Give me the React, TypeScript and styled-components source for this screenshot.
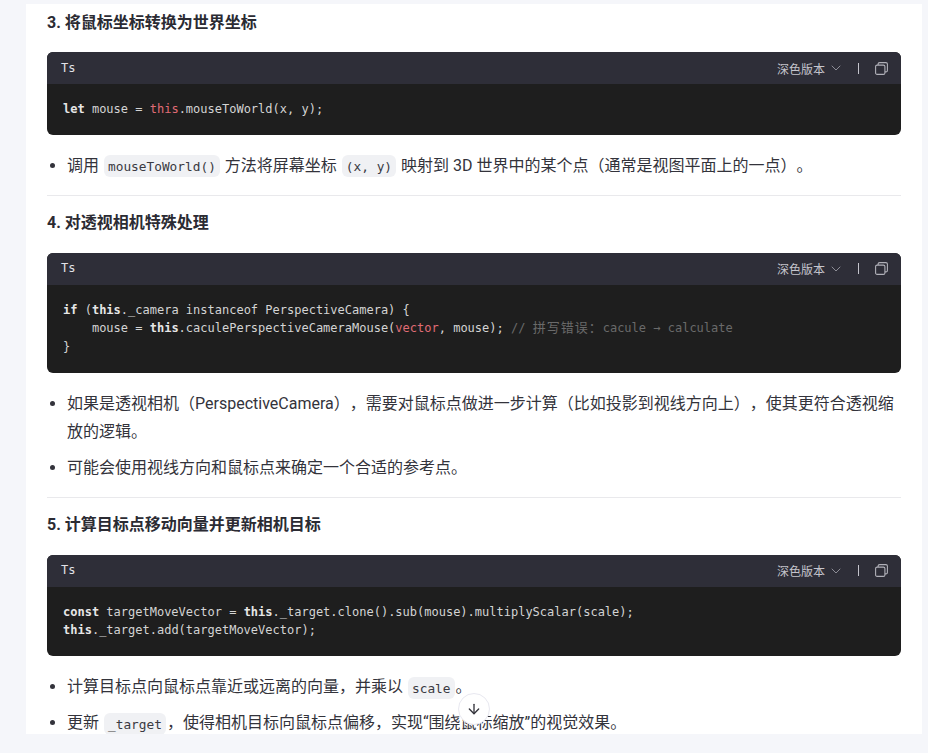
import React from "react";
import styled, { createGlobalStyle } from "styled-components";
import { ChevronDown, ArrowDown } from "lucide-react";

const GlobalStyle = createGlobalStyle`
  html, body {
    margin: 0;
    padding: 0;
    height: 753px;
    overflow: hidden;
    background: #f5f6fa;
  }
`;

const Page = styled.div`
  position: relative;
  height: 753px;
  padding: 4px 6px 19px 26px;
  box-sizing: border-box;
  font-family: Roboto, "Noto Sans CJK SC", sans-serif;
  text-spacing-trim: space-all;
  color: #33333b;
`;

const Article = styled.div`
  height: 100%;
  background: #fff;
  padding: 0 21px;
  overflow: hidden;
  box-sizing: border-box;
`;

const Heading = styled.h3<{ $first?: boolean }>`
  margin: ${(p) => (p.$first ? "5px 0 15px" : "13px 0 16px")};
  font-size: 16px;
  line-height: 28px;
  font-weight: 700;
  color: #2b2b33;
`;

const CodeBlock = styled.div`
  border-radius: 6px;
  overflow: hidden;
  background: #1e1e1e;
`;

const CodeHeader = styled.div`
  height: 32px;
  background: #2e2e38;
  display: flex;
  align-items: center;
  padding: 0 13px 0 14px;
  color: #e2e2e8;
`;

const Lang = styled.span`
  font-family: "DejaVu Sans Mono", monospace;
  font-size: 12px;
  font-weight: 400;
  flex: 1;
  margin-bottom: 1px;
`;

const Theme = styled.span`
  font-size: 12px;
  color: #c4c4cc;
`;

const Chevron = styled(ChevronDown)`
  margin: 0 0 0 3px;
  color: #8d8d96;
`;

const Sep = styled.span`
  width: 1px;
  height: 11px;
  background: #c4c4cc;
  margin: 0 16px 0 14px;
`;

const CopyIcon = styled.svg`
  display: block;
  color: #b0b0b8;
`;

const CodeBody = styled.pre`
  margin: 0;
  padding: 16px;
  font-family: "DejaVu Sans Mono", "Noto Sans CJK SC", monospace;
  font-size: 12px;
  line-height: 18.67px;
  color: #d4d4d4;
`;

const Keyword = styled.b`
  color: #e6e6e6;
  font-weight: 700;
`;

const Red = styled.span`
  color: #e06c75;
`;

const Comment = styled.span`
  color: #6a6a6a;
`;

const CommentCjk = styled.span`
  font-size: 13px;
  letter-spacing: 1px;
  line-height: 1;
`;

const List = styled.ul`
  margin: 17px 0 0;
  padding: 0 0 0 20px;
`;

const Item = styled.li`
  font-size: 16px;
  line-height: 28px;
  margin-bottom: 8px;
`;

const InlineCode = styled.code`
  font-family: "DejaVu Sans Mono", monospace;
  font-size: 12.8px;
  line-height: 26px;
  background: #f0f1f4;
  border-radius: 6px;
  padding: 3.5px 4px;
  margin: 0 1px;
  color: #3a3a42;
`;

const Rule = styled.hr`
  border: none;
  border-top: 1px solid #e9e9ec;
  margin: 15px 0 0;
`;

const ScrollButton = styled.button`
  position: absolute;
  left: 458px;
  top: 693px;
  width: 32px;
  height: 32px;
  border-radius: 50%;
  border: 1px solid #e8e8f0;
  background: #fff;
  padding: 0;
  display: flex;
  align-items: center;
  justify-content: center;
  color: #33333b;
`;

const Code = ({ children }: { children: React.ReactNode }) => (
  <CodeBlock>
    <CodeHeader>
      <Lang>Ts</Lang>
      <Theme>深色版本</Theme>
      <Chevron size={16} strokeWidth={1.5} />
      <Sep />
      <CopyIcon width="13" height="13" viewBox="0 0 13 13" fill="none" stroke="currentColor" strokeWidth="1.1">
        <rect x="0.6" y="3.1" width="9.3" height="9.3" rx="1.5" />
        <path d="M3.1 3.1V2.1A1.5 1.5 0 0 1 4.6 0.6h6.3A1.5 1.5 0 0 1 12.4 2.1V8.4a1.5 1.5 0 0 1-1.5 1.5H9.9" />
      </CopyIcon>
    </CodeHeader>
    <CodeBody>{children}</CodeBody>
  </CodeBlock>
);

export default function App() {
  return (
    <>
      <GlobalStyle />
      <Page>
        <Article>
          <Heading $first>3. 将鼠标坐标转换为世界坐标</Heading>
          <Code>
            <Keyword>let</Keyword> mouse = <Red>this</Red>.mouseToWorld(x, y);
          </Code>
          <List>
            <Item>
              调用 <InlineCode>mouseToWorld()</InlineCode> 方法将屏幕坐标 <InlineCode>(x, y)</InlineCode> 映射到 3D
              世界中的某个点（通常是视图平面上的一点）。
            </Item>
          </List>
          <Rule />
          <Heading>4. 对透视相机特殊处理</Heading>
          <Code>
            <Keyword>if</Keyword> (<Keyword>this</Keyword>._camera instanceof PerspectiveCamera) {"{"}
            {"\n    "}mouse = <Keyword>this</Keyword>.caculePerspectiveCameraMouse(<Red>vector</Red>, mouse);{" "}
            <Comment>
              // <CommentCjk>拼写错误：</CommentCjk>cacule → calculate
            </Comment>
            {"\n}"}
          </Code>
          <List>
            <Item>如果是透视相机（PerspectiveCamera），需要对鼠标点做进一步计算（比如投影到视线方向上），使其更符合透视缩放的逻辑。</Item>
            <Item>可能会使用视线方向和鼠标点来确定一个合适的参考点。</Item>
          </List>
          <Rule />
          <Heading>5. 计算目标点移动向量并更新相机目标</Heading>
          <Code>
            <Keyword>const</Keyword> targetMoveVector = <Keyword>this</Keyword>._target.clone().sub(mouse).multiplyScalar(scale);
            {"\n"}
            <Keyword>this</Keyword>._target.add(targetMoveVector);
          </Code>
          <List>
            <Item>
              计算目标点向鼠标点靠近或远离的向量，并乘以 <InlineCode>scale</InlineCode>。
            </Item>
            <Item>
              更新 <InlineCode>_target</InlineCode>，使得相机目标向鼠标点偏移，实现“围绕鼠标缩放”的视觉效果。
            </Item>
          </List>
        </Article>
        <ScrollButton>
          <ArrowDown size={16} />
        </ScrollButton>
      </Page>
    </>
  );
}
